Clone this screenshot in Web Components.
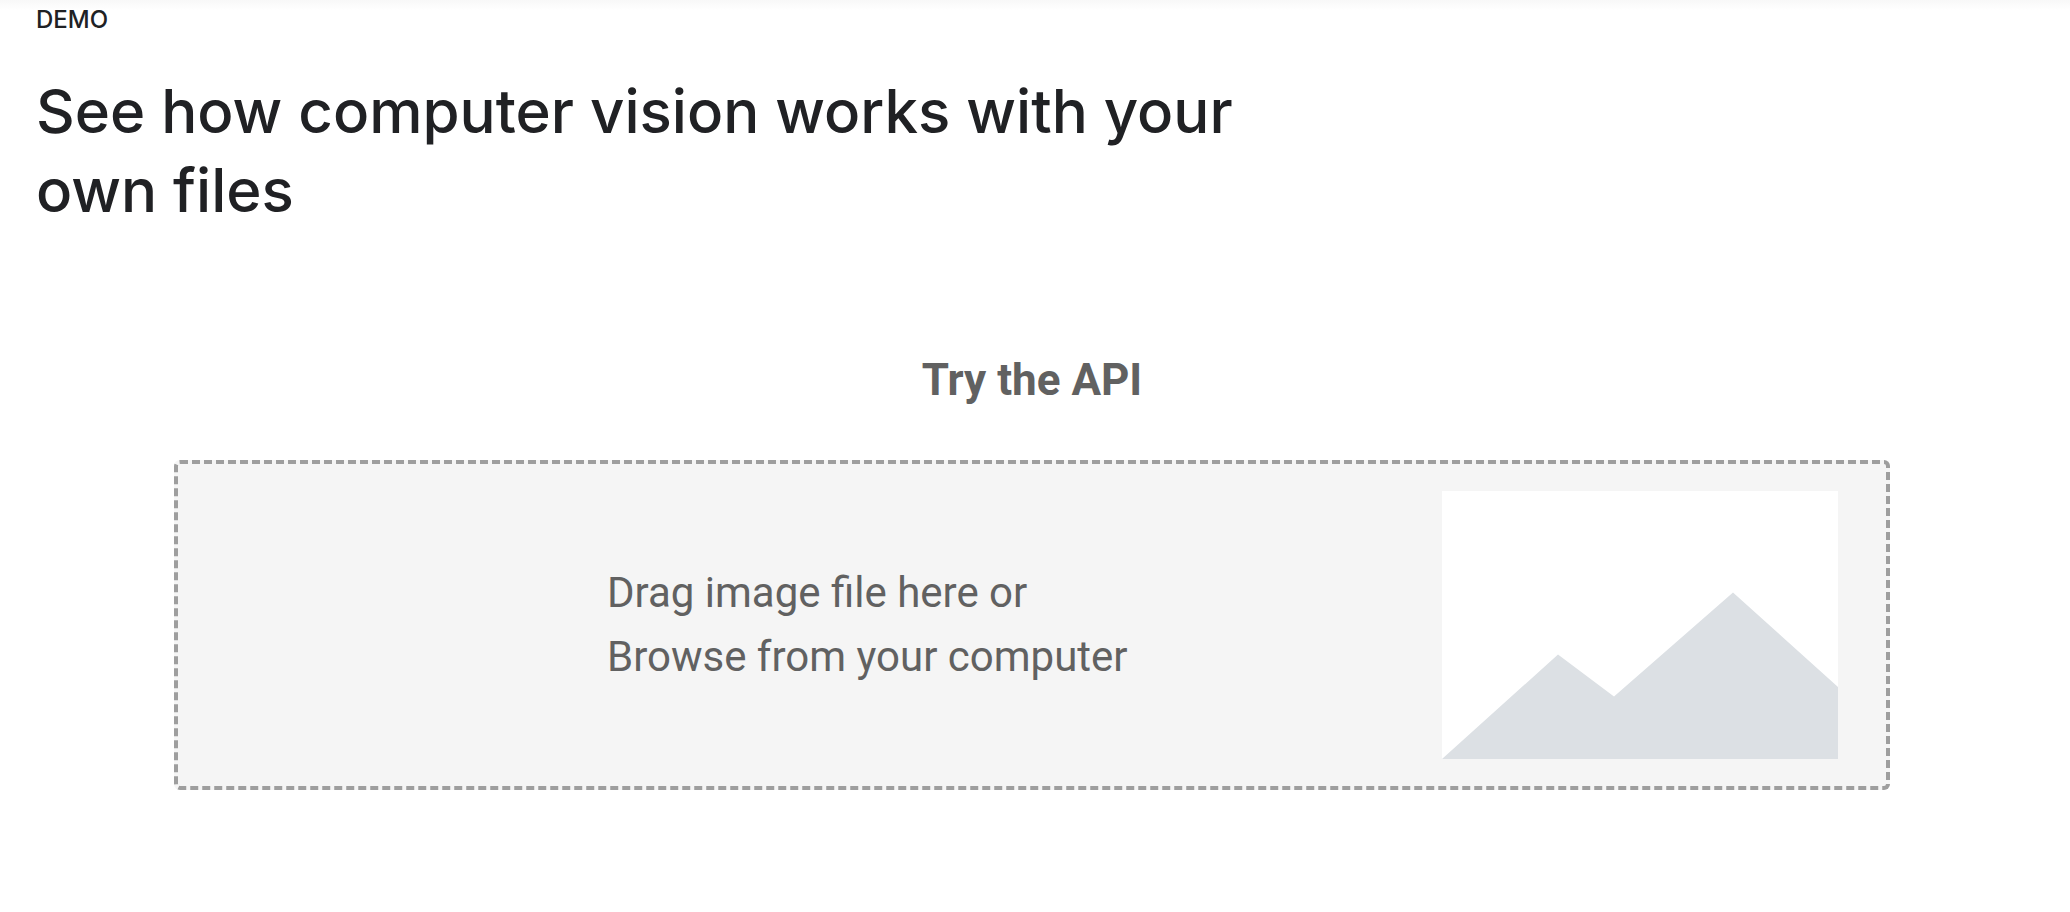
<!DOCTYPE html>
<html lang="en">
<head>
<meta charset="utf-8">
<meta name="viewport" content="width=device-width, initial-scale=1">
<title>Computer vision demo</title>
<style>
  body { margin: 0; background: #fff; }
</style>
</head>
<body>
<demo-page>
  <section-intro slot="intro">
    <span slot="eyebrow">DEMO</span>
    See how computer vision works with your own files
  </section-intro>
  <try-api slot="demo">
    <span slot="title">Try the API</span>
    <file-drop>
      <span slot="hint">Drag image file here or</span>
      <span slot="browse">Browse from your computer</span>
      <image-placeholder slot="art"></image-placeholder>
    </file-drop>
  </try-api>
</demo-page>

<template id="demo-page">
  <style>
    :host {
      display: block;
      box-sizing: border-box;
      padding: 0 42px 120px 36px;
      background: linear-gradient(#f8f8f8, #fff 10px);
      font-family: Roboto, sans-serif;
      color: #202124;
    }
    main { display: flex; flex-direction: column; gap: 124px; }
  </style>
  <main>
    <slot name="intro"></slot>
    <slot name="demo"></slot>
  </main>
</template>

<template id="section-intro">
  <style>
    :host { display: block; font-family: Inter, sans-serif; font-weight: 500; }
    p { margin: 0 0 36px; padding-top: 4px; font-size: 24px; line-height: 32px; }
    h2 { margin: 0; max-width: 1240px; font-size: 60px; line-height: 79px; font-weight: 500; }
  </style>
  <p><slot name="eyebrow"></slot></p>
  <h2><slot></slot></h2>
</template>

<template id="try-api">
  <style>
    :host { display: block; padding: 0 138px; color: #616161; }
    h3 { margin: 0 0 54px; font-size: 44px; line-height: 52px; font-weight: 700; text-align: center; }
  </style>
  <h3><slot name="title"></slot></h3>
  <slot></slot>
</template>

<template id="file-drop">
  <style>
    :host {
      display: flex;
      align-items: center;
      justify-content: space-between;
      box-sizing: border-box;
      padding: 27px 48px 27px 25%;
      border: 4px dashed #9e9e9e;
      border-radius: 6px;
      background: #f5f5f5;
      font-size: 42px;
      line-height: 64px;
    }
    .prompt { display: flex; flex-direction: column; align-items: flex-start; }
    button {
      margin: 0;
      padding: 0;
      border: 0;
      background: none;
      color: inherit;
      font: inherit;
      text-align: left;
      cursor: pointer;
    }
  </style>
  <div class="prompt">
    <slot name="hint"></slot>
    <button type="button"><slot name="browse"></slot></button>
    <input type="file" accept="image/*" aria-label="Image file" hidden>
  </div>
  <slot name="art"></slot>
</template>

<template id="image-placeholder">
  <style>
    :host { display: block; flex: none; width: 396px; }
    svg { display: block; width: 100%; }
  </style>
  <svg viewBox="0 0 396 268" aria-hidden="true">
    <rect width="396" height="268" fill="#fff"/>
    <path d="M0 268 116 163.500 172 205.500 291 101.500 396 196V268Z" fill="#dce0e4"/>
  </svg>
</template>

<script>
  class TemplateElement extends HTMLElement {
    constructor() {
      super();
      const template = document.getElementById(this.localName);
      this.attachShadow({ mode: 'open' }).append(template.content.cloneNode(true));
    }
  }

  class FileDrop extends TemplateElement {
    connectedCallback() {
      const input = this.shadowRoot.querySelector('input');
      this.shadowRoot.querySelector('button').onclick = () => input.click();
      this.ondragover = (event) => event.preventDefault();
      this.ondrop = (event) => {
        event.preventDefault();
        input.files = event.dataTransfer.files;
      };
    }
  }

  customElements.define('demo-page', class extends TemplateElement {});
  customElements.define('section-intro', class extends TemplateElement {});
  customElements.define('try-api', class extends TemplateElement {});
  customElements.define('file-drop', FileDrop);
  customElements.define('image-placeholder', class extends TemplateElement {});
</script>
</body>
</html>
